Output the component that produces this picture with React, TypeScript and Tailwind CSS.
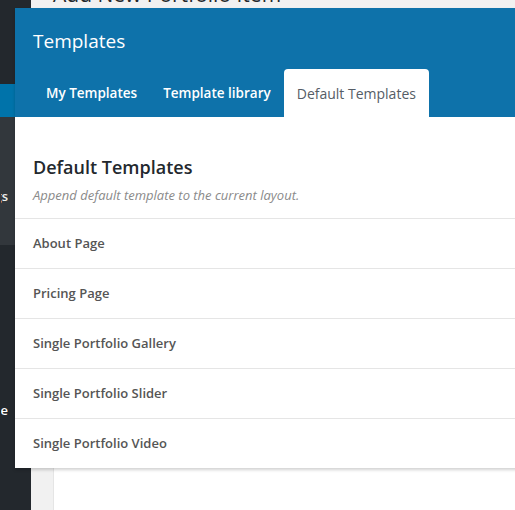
import React from "react";

const rows = [
  "About Page",
  "Pricing Page",
  "Single Portfolio Gallery",
  "Single Portfolio Slider",
  "Single Portfolio Video",
];

export default function App() {
  return (
    <div
      className="relative flex w-[515px] h-[510px] overflow-hidden bg-[#f1f1f1]"
      style={{ fontFamily: '"Open Sans", "Noto Sans", sans-serif' }}
    >
      {/* WP admin sidebar */}
      <div className="flex flex-col w-[31px] shrink-0 bg-[#23282d] text-[#eeeeee] text-[13px]">
        <div className="h-[84px]" />
        <div className="h-[33px] bg-[#0073aa]" />
        <div className="h-[128px] bg-[#32373c] pt-[69px]">
          <div className="flex justify-end ml-[1px] w-[7px] overflow-hidden whitespace-nowrap leading-[20px] font-semibold">
            Settings
          </div>
        </div>
        <div className="pt-[155px]">
          <div className="flex justify-end ml-[1px] w-[7px] overflow-hidden whitespace-nowrap leading-[20px] font-semibold text-white">
            Template
          </div>
        </div>
      </div>

      {/* page content */}
      <div className="flex flex-col flex-1 pl-[22px]">
        <div className="mt-[-21px] h-[32px] text-[21px] leading-[30px] text-[#23282d] whitespace-nowrap">
          Add New Portfolio Item
        </div>
        <div className="flex-1" />
        <div className="h-[60px] bg-white border-l border-[#e5e5e5]" />
      </div>

      {/* Templates modal */}
      <div className="absolute left-[15px] top-[8px] w-[530px] bg-white shadow-[0_2px_3px_rgba(0,0,0,0.18)]">
        <div className="h-[109px] bg-[#0e72aa] flex flex-col">
          <div className="pl-[18px] pt-[20px] text-[19px] leading-[26px] text-white">
            Templates
          </div>
          <div className="flex pl-[18px] mt-[15px]">
            <div className="h-[48px] px-[13px] flex items-center text-[13.5px] font-semibold text-white">
              My Templates
            </div>
            <div className="h-[48px] px-[13px] flex items-center text-[13.5px] font-semibold text-white">
              Template library
            </div>
            <div className="h-[48px] px-[13px] flex items-center text-[14px] bg-white text-[#555d66] rounded-t-[4px]">
              Default Templates
            </div>
          </div>
        </div>
        <div className="pt-[38px]">
          <div className="pl-[18px] text-[18px] leading-[24px] font-semibold text-[#23282d]">
            Default Templates
          </div>
          <div className="pl-[18px] mt-[7px] text-[13px] leading-[18px] italic text-[#8a8a8a]">
            Append default template to the current layout.
          </div>
          <div className="mt-[14px] border-t border-[#e5e5e5]">
            {rows.map((r, i) => (
              <div
                key={r}
                className={
                  i < rows.length - 1
                    ? "h-[50px] border-b border-[#e5e5e5] pl-[18px] flex items-center text-[13px] font-semibold text-[#555555]"
                    : "h-[49px] pl-[18px] flex items-center text-[13px] font-semibold text-[#555555]"
                }
              >
                {r}
              </div>
            ))}
          </div>
        </div>
      </div>
    </div>
  );
}
